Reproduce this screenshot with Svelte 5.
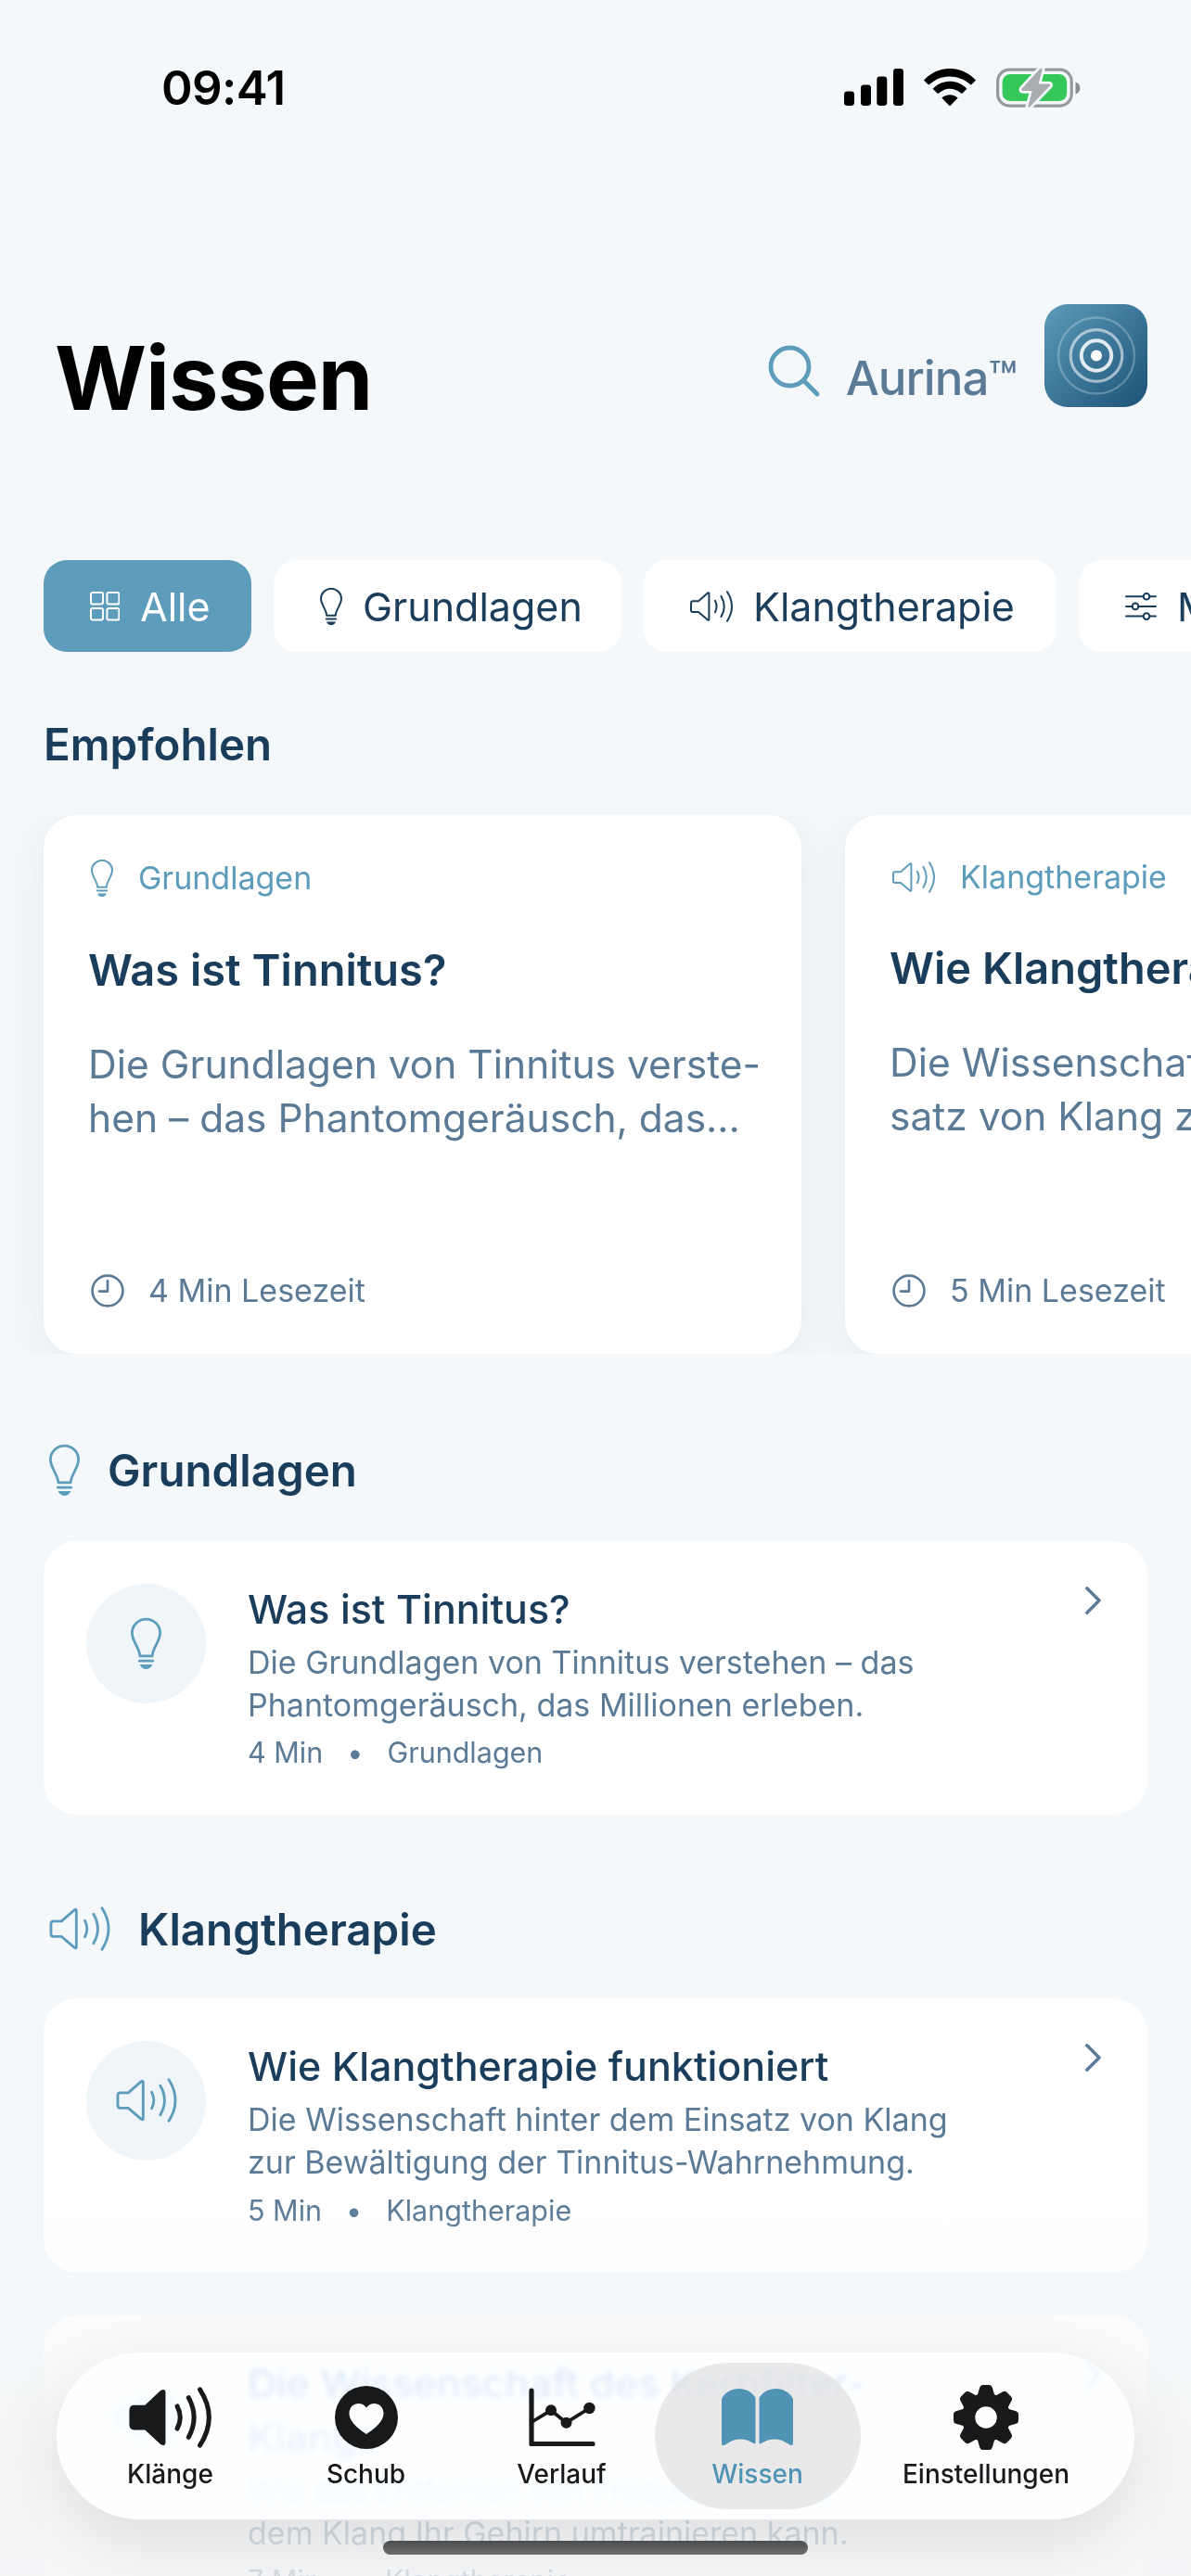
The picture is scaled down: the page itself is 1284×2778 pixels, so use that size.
<script>
	let activeChip = $state("Alle");
	let activeTab = $state("Wissen");

	const chips = [
		{ icon: "grid", label: "Alle", width: 224 },
		{ icon: "bulb", label: "Grundlagen", width: 375 },
		{ icon: "speaker", label: "Klangtherapie", width: 445 },
		{ icon: "sliders", label: "Management", width: 420 },
	];

	const featured = [
		{
			icon: "bulb",
			category: "Grundlagen",
			title: "Was ist Tinnitus?",
			text: "Die Grundlagen von Tinnitus verste-\nhen – das Phantomgeräusch, das...",
			minutes: 4,
		},
		{
			icon: "speaker",
			category: "Klangtherapie",
			title: "Wie Klangtherapie funktioniert",
			text: "Die Wissenschaft hinter dem Ein-\nsatz von Klang zur Bewältigung...",
			minutes: 5,
		},
	];

	const sections = [
		{
			icon: "bulb",
			name: "Grundlagen",
			articles: [
				{
					title: "Was ist Tinnitus?",
					text: "Die Grundlagen von Tinnitus verstehen – das\nPhantomgeräusch, das Millionen erleben.",
					minutes: 4,
				},
			],
		},
		{
			icon: "speaker",
			name: "Klangtherapie",
			articles: [
				{
					title: "Wie Klangtherapie funktioniert",
					text: "Die Wissenschaft hinter dem Einsatz von Klang\nzur Bewältigung der Tinnitus-Wahrnehmung.",
					minutes: 5,
				},
				{
					title: "Die Wissenschaft des Kerbfilter-\nKlangs",
					text: "Wie das Entfernen von Frequenzen aus\ndem Klang Ihr Gehirn umtrainieren kann.",
					minutes: 7,
				},
			],
		},
	];

	const tabs = [
		{ icon: "speaker-fill", label: "Klänge" },
		{ icon: "heart", label: "Schub" },
		{ icon: "chart", label: "Verlauf" },
		{ icon: "book", label: "Wissen" },
		{ icon: "gear", label: "Einstellungen" },
	];

	const teeth = [0, 45, 90, 135, 180, 225, 270, 315];
</script>

{#snippet icon(name)}
	{#if name === "grid"}
		<svg class="icon grid" viewBox="0 0 32 32">
			<rect x="1" y="1" width="13" height="12.6" rx="2" />
			<rect x="18.4" y="1" width="13" height="12.6" rx="2" />
			<rect x="1" y="18" width="13" height="12.6" rx="2" />
			<rect x="18.4" y="18" width="13" height="12.6" rx="2" />
		</svg>
	{:else if name === "bulb"}
		<svg class="icon bulb" viewBox="0 0 24 40">
			<path d="M7.2 29.8C7 23.5 1 18 1 11.6A11 10.8 0 0 1 23 11.6C23 18 17 23.5 16.8 29.8Z" />
			<path d="M6.8 33.6H17.2" />
			<path class="solid" d="M7 36.4H17C16 39 14 40 12 40S8 39 7 36.4Z" />
		</svg>
	{:else if name === "speaker"}
		<svg class="icon speaker" viewBox="0 0 46 34">
			<path d="M3 11.2H9L19 2.6Q20.4 1.6 20.4 3.2V30.8Q20.4 32.4 19 31.4L9 22.9H3Q1 22.9 1 20.9V13.2Q1 11.2 3 11.2Z" />
			<path d="M26.9 10.8Q30.2 17 26.9 23.2M33.5 5.9Q40 17 33.5 28.1M40 1.2Q50 17 40 32.8" />
		</svg>
	{:else if name === "sliders"}
		<svg class="icon sliders" viewBox="0 0 34 30">
			<path d="M1 4.2H19.5M26.5 4.2H33M1 14.9H7.5M14.5 14.9H33M1 25.6H19.5M26.5 25.6H33" />
			<circle cx="23" cy="4.2" r="3.3" />
			<circle cx="11" cy="14.9" r="3.3" />
			<circle cx="23" cy="25.6" r="3.3" />
		</svg>
	{:else if name === "clock"}
		<svg class="icon clock" viewBox="0 0 36 36">
			<circle cx="18" cy="18" r="16.4" />
			<path d="M18 7.2V18.6H9" />
		</svg>
	{:else if name === "speaker-fill"}
		<svg class="icon" width="91" height="66" viewBox="0 0 46 34">
			<path class="solid" d="M3 10.2H9L17.5 2.2Q20.4 .4 20.4 3.4V30.6Q20.4 33.6 17.5 31.8L9 23.9H3Q.3 23.9 .3 21V13.2Q.3 10.2 3 10.2Z" />
			<path stroke-width="2.6" d="M26.9 10.8Q30.2 17 26.9 23.2M33.2 6Q39.2 17 33.2 28M39.5 1.5Q49.6 17 39.5 32.5" />
		</svg>
	{:else if name === "heart"}
		<svg class="icon" width="68" height="68" viewBox="0 0 68 68">
			<path class="solid" fill-rule="evenodd" d="M34 0A34 34 0 1 1 34 68A34 34 0 1 1 34 0ZM34 52C40 48 52.5 39.5 52.5 29.5C52.5 19 40 15 34 23.5C28 15 15.5 19 15.5 29.5C15.5 39.5 28 48 34 52Z" />
		</svg>
	{:else if name === "chart"}
		<svg class="icon" width="72" height="65" viewBox="0 0 72 65">
			<path stroke-width="5.2" d="M3 4V61.5H69" />
			<path stroke-width="3.8" d="M4 37.5L24 25.3L40.5 38.7L65.4 23" />
			<circle class="solid" cx="24" cy="25.3" r="6" />
			<circle class="solid" cx="40.5" cy="38.7" r="6" />
			<circle class="solid" cx="65.4" cy="23" r="6.2" />
		</svg>
	{:else if name === "book"}
		<svg class="icon" width="77" height="61" viewBox="0 0 77 61">
			<path class="solid" d="M0 11C4 3.5 11 0 18.5 0S33 3.5 36.5 10V57.5Q36.5 60.5 34 58.8C25 53 14 53 5 59.8Q0 63 0 58.5Z" />
			<path class="solid" d="M77 11C73 3.5 66 0 58.5 0S44 3.5 40.5 10V57.5Q40.5 60.5 43 58.8C52 53 63 53 72 59.8Q77 63 77 58.5Z" />
		</svg>
	{:else if name === "gear"}
		<svg class="icon" width="70" height="70" viewBox="0 0 70 70">
			<circle cx="35" cy="35" r="19" stroke-width="14.5" />
			{#each teeth as angle}
				<path
					class="solid"
					transform="rotate({angle} 35 35)"
					d="M25.5 12L28.3 2.6Q29 0 31.5 0H38.5Q41 0 41.7 2.6L44.5 12Z"
				/>
			{/each}
		</svg>
	{/if}
{/snippet}

<div class="screen">
	<div class="status">
		<span class="time">09:41</span>
		<div class="status-icons">
			<svg width="64" height="40" viewBox="0 0 64 40">
				<rect x="0" y="24.5" width="11" height="15.5" rx="3.4" />
				<rect x="18" y="17.5" width="11" height="22.5" rx="3.4" />
				<rect x="35.3" y="8.5" width="11" height="31.5" rx="3.4" />
				<rect x="53" y="0" width="11" height="40" rx="3.4" />
			</svg>
			<svg class="wifi" width="56" height="41" viewBox="0 0 56 41">
				<path d="M0 12.5C15-4.2 41-4.2 56 12.5L51.5 17Q50.8 17.7 50 17C37 5.5 19 5.5 6 17Q5.2 17.7 4.5 17Z" />
				<path d="M9.6 21.7C20 11.2 36 11.2 46.4 21.7L41.6 26.5Q40.8 27.2 40 26.5C32.5 20.3 23.5 20.3 16 26.5Q15.2 27.2 14.4 26.5Z" />
				<path d="M19.3 31.5C24.5 27 31.5 27 36.7 31.5L29 39.6Q28 40.6 27 39.6Z" />
			</svg>
			<svg class="battery" width="91" height="43" viewBox="0 0 91 43">
				<rect x="1.6" y="2.1" width="79.6" height="39" rx="12.5" fill="none" stroke="#96999b" stroke-width="3.2" />
				<path d="M85.5 15.5C92 17 92 27 85.5 28.5Z" fill="#8a8c8e" />
				<rect x="6.6" y="7" width="69.6" height="29" rx="8.5" fill="#34c759" />
				<path
					d="M47.6 .8L27.5 22.8Q26.6 25 29 25H38.8L34.2 42Q35 43.6 36.4 42L58 19.6Q59 17.6 56.6 17.4H45.6L49.8 1.8Q49.2 0 47.6 .8Z"
					fill="#a9adaf"
					stroke="#f4f8fb"
					stroke-width="5.4"
					paint-order="stroke"
				/>
			</svg>
		</div>
	</div>

	<header class="header">
		<h1>Wissen</h1>
		<svg class="search" width="58" height="58" viewBox="0 0 58 58">
			<circle cx="23.5" cy="23.5" r="20.5" />
			<path d="M38.5 38.5L53 53" />
		</svg>
		<span class="brand">Aurina™</span>
		<svg class="logo" width="111" height="111" viewBox="0 0 111 111">
			<defs>
				<linearGradient id="logo-bg" x1="0" y1="0" x2="1" y2="1">
					<stop offset="0" stop-color="#5b9bba" />
					<stop offset="1" stop-color="#1c5277" />
				</linearGradient>
			</defs>
			<rect width="111" height="111" rx="25" fill="url(#logo-bg)" />
			<g fill="none" stroke="#fff">
				<circle cx="56" cy="55.5" r="41" stroke-width="2.4" opacity=".25" />
				<circle cx="56" cy="55.5" r="27.8" stroke-width="3.2" opacity=".55" />
				<circle cx="56" cy="55.5" r="16.2" stroke-width="4" opacity=".85" />
			</g>
			<circle cx="56" cy="55.5" r="6" fill="#fff" />
		</svg>
	</header>

	<div class="chips">
		{#each chips as chip}
			<button
				class="chip"
				class:active={activeChip === chip.label}
				style="width:{chip.width}px"
				onclick={() => activeChip = chip.label}
			>
				{@render icon(chip.icon)}
				<span>{chip.label}</span>
			</button>
		{/each}
	</div>

	<h2 class="featured-title">Empfohlen</h2>

	<div class="featured">
		{#each featured as item}
			<article class="feature">
				<div class="feature-category">
					{@render icon(item.icon)}
					<span>{item.category}</span>
				</div>
				<h3>{item.title}</h3>
				<p>{item.text}</p>
				<div class="feature-time">
					{@render icon("clock")}
					<span>{item.minutes} Min Lesezeit</span>
				</div>
			</article>
		{/each}
	</div>

	{#each sections as section}
		<section class="section">
			<div class="section-head">
				{@render icon(section.icon)}
				<h2>{section.name}</h2>
			</div>
			<div class="list">
				{#each section.articles as article}
					<article class="row">
						<div class="row-icon">{@render icon(section.icon)}</div>
						<div class="row-body">
							<h3>{article.title}</h3>
							<p>{article.text}</p>
							<div class="meta">
								<span>{article.minutes} Min</span>
								<span>•</span>
								<span>{section.name}</span>
							</div>
						</div>
						<svg class="chevron" width="17" height="30" viewBox="0 0 17 30">
							<path d="M1.8 1.8L15 15L1.8 28.2" />
						</svg>
					</article>
				{/each}
			</div>
		</section>
	{/each}

	<div class="fade"></div>

	<nav class="tabbar">
		{#each tabs as tab}
			<button
				class="tab"
				class:active={activeTab === tab.label}
				onclick={() => activeTab = tab.label}
			>
				<span class="tab-icon">{@render icon(tab.icon)}</span>
				<span class="tab-label">{tab.label}</span>
			</button>
		{/each}
	</nav>

	<div class="home-indicator"></div>
</div>

<style>
	:global(body) {
		margin: 0;
		background: #f4f8fb;
	}

	.screen {
		position: relative;
		width: 1284px;
		height: 2778px;
		overflow: hidden;
		background: #f4f8fb;
		color: #1a3d5c;
		font-family: Inter, "Liberation Sans", sans-serif;
	}

	h1,
	h2,
	h3,
	p {
		margin: 0;
	}

	button {
		border: none;
		background: none;
		padding: 0;
		color: inherit;
		font-family: inherit;
		cursor: pointer;
	}

	svg {
		display: block;
		flex-shrink: 0;
	}

	.icon {
		fill: none;
		stroke: currentColor;
		stroke-width: 2;
		stroke-linecap: round;
		stroke-linejoin: round;
	}

	.icon .solid {
		fill: currentColor;
		stroke: none;
	}

	.grid {
		width: 32px;
		height: 32px;
	}

	.bulb {
		width: 24px;
		height: 40px;
	}

	.speaker {
		width: 46px;
		height: 34px;
	}

	.sliders {
		width: 34px;
		height: 30px;
	}

	.clock {
		width: 36px;
		height: 36px;
		stroke-width: 2.6;
	}

	.status {
		display: flex;
		align-items: center;
		justify-content: space-between;
		height: 188px;
		padding: 0 119px 0 174px;
		color: #000;
	}

	.time {
		font-size: 51px;
		font-weight: 600;
		letter-spacing: -0.6px;
	}

	.status-icons {
		display: flex;
		align-items: center;
	}

	.wifi {
		margin-left: 22px;
	}

	.battery {
		margin-left: 22px;
	}

	.header {
		display: flex;
		align-items: center;
		height: 158px;
		padding: 140px 47px 118px 59px;
	}

	.header h1 {
		color: #000;
		font-size: 95.5px;
		font-weight: 700;
		letter-spacing: -1px;
		margin-right: auto;
	}

	.search {
		margin: 0 26px 12px 0;
		fill: none;
		stroke: #5e9cbc;
		stroke-width: 4.8;
		stroke-linecap: round;
	}

	.brand {
		color: #5a7a96;
		font-size: 51px;
		font-weight: 500;
		letter-spacing: -1px;
		margin-right: 30px;
	}

	.logo {
		align-self: flex-start;
	}

	.chips {
		display: flex;
		gap: 24px;
		padding-left: 47px;
	}

	.chip {
		display: flex;
		flex: none;
		align-items: center;
		gap: 22px;
		box-sizing: border-box;
		height: 99px;
		padding-left: 50px;
		border-radius: 25px;
		background: #fff;
		font-size: 43px;
		white-space: nowrap;
	}

	.chip.active {
		background: #5e9cbc;
		color: #fff;
	}

	.featured-title {
		margin: 71px 0 47px 47px;
		font-size: 47.5px;
		font-weight: 600;
		line-height: 58px;
	}

	.featured {
		display: flex;
		gap: 47px;
		height: 581px;
		padding-left: 47px;
		overflow: hidden;
	}

	.feature {
		display: flex;
		flex: none;
		flex-direction: column;
		box-sizing: border-box;
		width: 817px;
		padding: 48px;
		border-radius: 36px;
		background: #fff;
		box-shadow: 0 12px 48px rgba(26, 61, 92, 0.07);
	}

	.feature-category,
	.feature-time {
		display: flex;
		align-items: center;
		padding-left: 3px;
		font-size: 34px;
		line-height: 38px;
	}

	.feature-category {
		gap: 27px;
		color: #5e9cbc;
	}

	.feature h3 {
		margin-top: 50px;
		font-size: 47px;
		font-weight: 600;
		line-height: 58px;
		white-space: nowrap;
	}

	.feature p {
		margin-top: 44px;
		color: #5a7a96;
		font-size: 42.5px;
		line-height: 58px;
		white-space: pre;
	}

	.feature-time {
		gap: 26px;
		height: 40px;
		margin-top: auto;
		color: #5a7a96;
	}

	.section-head {
		display: flex;
		align-items: center;
		gap: 30px;
		margin: 96.5px 0 48px;
		padding-left: 53px;
	}

	.section-head h2 {
		font-size: 47.5px;
		font-weight: 600;
		line-height: 53px;
	}

	.section-head .icon {
		color: #5e9cbc;
	}

	.section-head .bulb,
	.row-icon .bulb {
		width: 33px;
		height: 57px;
	}

	.section-head .speaker,
	.row-icon .speaker {
		width: 66px;
		height: 48px;
	}

	.list {
		display: flex;
		flex-direction: column;
		gap: 46px;
		padding: 0 47px;
	}

	.row {
		display: flex;
		align-items: flex-start;
		padding: 44px 50px 47px 46px;
		border-radius: 36px;
		background: #fff;
	}

	.row-icon {
		display: flex;
		flex: none;
		align-items: center;
		justify-content: center;
		width: 129px;
		height: 129px;
		margin: 2px 45px 0 0;
		border-radius: 50%;
		background: #eff5f9;
		color: #5e9cbc;
	}

	.row-body h3 {
		font-size: 43px;
		font-weight: 500;
		line-height: 58px;
		white-space: pre;
	}

	.row-body p {
		margin-top: 6px;
		color: #5a7a96;
		font-size: 34px;
		line-height: 46.4px;
		white-space: pre;
	}

	.meta {
		display: flex;
		gap: 26px;
		margin-top: 8px;
		color: #5a7a96;
		font-size: 30.5px;
		line-height: 40px;
	}

	.chevron {
		margin: 5px 0 0 auto;
		fill: none;
		stroke: #5a7a96;
		stroke-width: 3.4;
		stroke-linecap: round;
		stroke-linejoin: round;
	}

	.fade {
		position: absolute;
		right: 0;
		bottom: 0;
		left: 0;
		height: 400px;
		background: linear-gradient(
			rgba(245, 246, 247, 0),
			rgba(245, 246, 247, 0.35) 25%,
			rgba(244, 245, 246, 0.72) 60%,
			rgba(243, 244, 246, 0.8)
		);
	}

	.tabbar {
		position: absolute;
		top: 2537px;
		left: 61px;
		display: flex;
		box-sizing: border-box;
		width: 1162px;
		height: 180px;
		padding: 11px 0 11px 17px;
		border-radius: 90px;
		background: rgba(252, 254, 255, 0.72);
		backdrop-filter: blur(3px) saturate(3) brightness(1.05);
		box-shadow: 0 22px 70px rgba(0, 0, 0, 0.1);
		color: #17191b;
	}

	.tab {
		display: flex;
		flex: none;
		flex-direction: column;
		align-items: center;
		width: 211px;
		height: 158px;
	}

	.tab:last-child {
		width: 282px;
	}

	.tab.active {
		width: 222px;
		margin: 0 -5.5px;
		border-radius: 79px;
		background: rgba(222, 223, 224, 0.68);
		color: #5093b4;
	}

	.tab-icon {
		display: flex;
		align-items: center;
		height: 70px;
		margin-top: 23.5px;
	}

	.tab-label {
		margin-top: 9px;
		font-size: 28px;
		font-weight: 500;
		line-height: 34px;
	}

	.home-indicator {
		position: absolute;
		bottom: 23px;
		left: 413px;
		width: 458px;
		height: 15px;
		border-radius: 8px;
		background: linear-gradient(#4b4d4e, #6c6e6f);
	}
</style>
